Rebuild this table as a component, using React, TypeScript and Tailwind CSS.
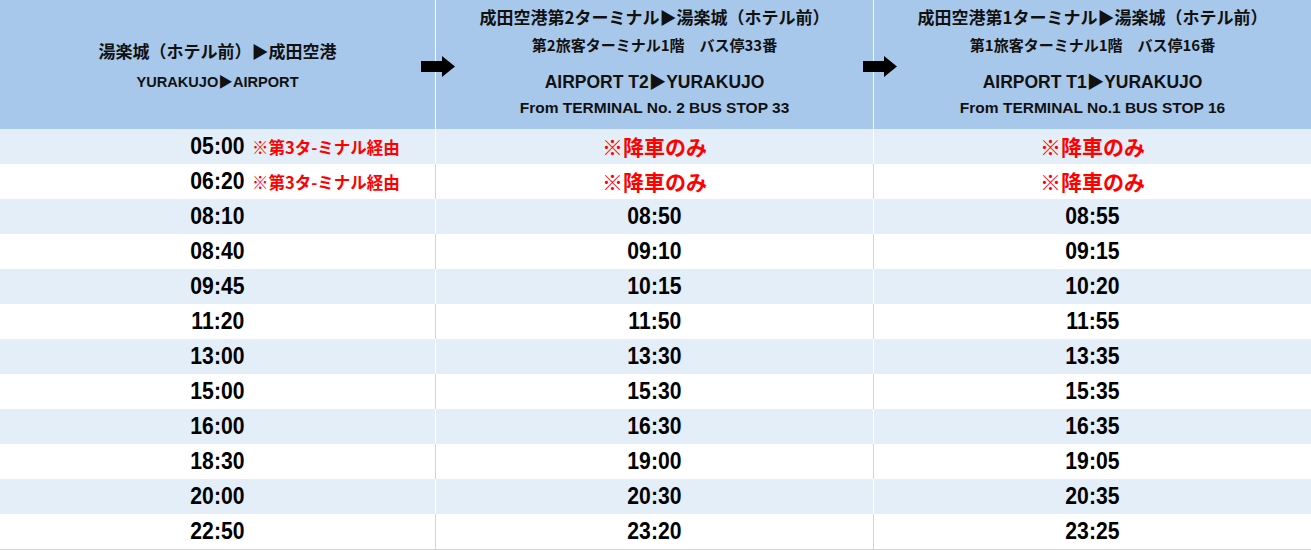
import React from "react";

const jp = "font-['Noto_Sans_CJK_JP',sans-serif]";
const latin = "font-['Liberation_Sans','Noto_Sans_CJK_JP',sans-serif]";
const time = "inline-block scale-x-[0.92] font-['Liberation_Sans',sans-serif] font-bold text-[23px] text-black";

type Row = { a: string; b: string; c: string; note?: boolean };

const rows: Row[] = [
  { a: "05:00", b: "※降車のみ", c: "※降車のみ", note: true },
  { a: "06:20", b: "※降車のみ", c: "※降車のみ", note: true },
  { a: "08:10", b: "08:50", c: "08:55" },
  { a: "08:40", b: "09:10", c: "09:15" },
  { a: "09:45", b: "10:15", c: "10:20" },
  { a: "11:20", b: "11:50", c: "11:55" },
  { a: "13:00", b: "13:30", c: "13:35" },
  { a: "15:00", b: "15:30", c: "15:35" },
  { a: "16:00", b: "16:30", c: "16:35" },
  { a: "18:30", b: "19:00", c: "19:05" },
  { a: "20:00", b: "20:30", c: "20:35" },
  { a: "22:50", b: "23:20", c: "23:25" },
];

function Arrow() {
  return (
    <svg width="34" height="21" viewBox="0 0 34 21" className="block">
      <path d="M0 5 H21 V0 L34 10.5 L21 21 V16 H0 Z" fill="#000" />
    </svg>
  );
}

function Cell({ text, line, last }: { text: string; line: string; last?: boolean }) {
  const red = text.startsWith("※");
  return (
    <div className={`flex items-center justify-center ${last ? "" : `border-r ${line}`}`}>
      {red ? (
        <span className={`${jp} font-bold text-[21px] text-[#ff0000] leading-none`}>{text}</span>
      ) : (
        <span className={`${time} leading-none`}>{text}</span>
      )}
    </div>
  );
}

function DestHeader({ t1, t2, en, stop, last }: { t1: string; t2: string; en: string; stop: string; last?: boolean }) {
  return (
    <div className={`flex flex-col items-center pt-[6px] ${last ? "" : "border-r border-white"}`}>
      <div className={`${jp} font-bold text-[17px] leading-[22px]`}>{t1}</div>
      <div className={`${jp} font-bold text-[15px] leading-[20px] mt-[7px]`}>{t2}</div>
      <div className={`${latin} font-bold text-[17.5px] leading-[22px] mt-[16px]`}>{en}</div>
      <div className={`${latin} font-bold text-[15.5px] leading-[20px] mt-[5px]`}>{stop}</div>
    </div>
  );
}

export default function App() {
  return (
    <div className="w-[1311px] h-[550px] bg-white overflow-hidden">
      {/* header */}
      <div className="relative grid grid-cols-[436px_438px_437px] h-[129px] bg-[#a8c8eb] text-[#111]">
        <div className="border-r border-white flex flex-col items-center pt-[40px]">
          <div className={`${jp} font-bold text-[17px] leading-[22px]`}>湯楽城（ホテル前）▶成田空港</div>
          <div className={`${latin} font-bold text-[14.6px] leading-[20px] mt-[10px]`}>YURAKUJO▶AIRPORT</div>
        </div>
        <DestHeader
          t1="成田空港第2ターミナル▶湯楽城（ホテル前）"
          t2="第2旅客ターミナル1階　バス停33番"
          en="AIRPORT T2▶YURAKUJO"
          stop="From TERMINAL No. 2 BUS STOP 33"
        />
        <DestHeader
          t1="成田空港第1ターミナル▶湯楽城（ホテル前）"
          t2="第1旅客ターミナル1階　バス停16番"
          en="AIRPORT T1▶YURAKUJO"
          stop="From TERMINAL No.1 BUS STOP 16"
          last
        />
        <div className="absolute left-[421px] top-[56px]">
          <Arrow />
        </div>
        <div className="absolute left-[863px] top-[56px]">
          <Arrow />
        </div>
      </div>

      {/* rows */}
      <div className="border-b border-[#d4d4d4]">
        {rows.map((r, i) => {
          const shaded = i % 2 === 0;
          const line = shaded ? "border-white" : "border-[#d4d4d4]";
          return (
            <div
              key={i}
              className={`grid grid-cols-[436px_438px_437px] h-[35px] ${shaded ? "bg-[#e3eef9]" : "bg-white"}`}
            >
              <div className={`flex items-center justify-center border-r ${line}`}>
                <div className="relative flex items-center">
                  <span className={`${time} leading-none`}>{r.a}</span>
                  {r.note && (
                    <span
                      className={`absolute left-full top-1/2 -translate-y-1/2 ml-[5px] whitespace-nowrap ${jp} font-bold text-[16.5px] leading-none text-[#ff0000]`}
                    >
                      ※第3タ-ミナル経由
                    </span>
                  )}
                </div>
              </div>
              <Cell text={r.b} line={line} />
              <Cell text={r.c} line={line} last />
            </div>
          );
        })}
      </div>
    </div>
  );
}
